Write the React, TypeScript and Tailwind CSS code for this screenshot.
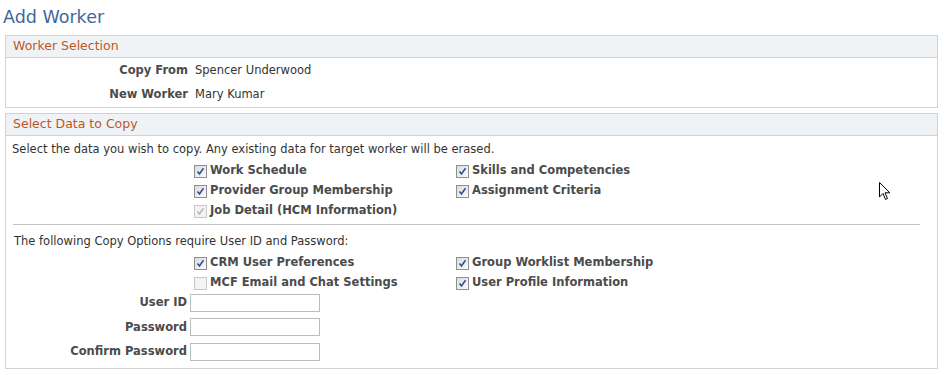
import React from "react";

function Box({ checked, disabled }: { checked: boolean; disabled?: boolean }) {
  return (
    <span
      className={
        "inline-flex items-center justify-center w-[13px] h-[13px] mr-[3px] shrink-0 border " +
        (disabled
          ? "border-[#c8c8c8] bg-[#f4f4f4]"
          : "border-[#8f8f8f] bg-gradient-to-br from-[#dcdcdc] to-[#fbfbfb]")
      }
    >
      {checked && (
        <svg width="9" height="9" viewBox="0 0 9 9">
          <path
            d="M1.5 4.5 L3.5 7 L7.5 1.2"
            fill="none"
            stroke={disabled ? "#b8b8b8" : "#2f4f9e"}
            strokeWidth="1.6"
          />
        </svg>
      )}
    </span>
  );
}

function Check({ label, checked, disabled }: { label: string; checked: boolean; disabled?: boolean }) {
  return (
    <div className="flex items-center h-[20px]">
      <Box checked={checked} disabled={disabled} />
      <span className="font-bold text-[#4b4b4b]">{label}</span>
    </div>
  );
}

function Header({ title }: { title: string }) {
  return (
    <div className="h-[22px] bg-[#eff3f5] border-b border-[#cfd3d8] flex items-center pl-[7px] text-[12.5px] text-[#c0571e]">
      {title}
    </div>
  );
}

function Field({ label }: { label: string }) {
  return (
    <div className="flex items-center h-[24.5px]">
      <div className="w-[184px] text-right pr-[3px] font-bold text-[#4b4b4b]">{label}</div>
      <div className="w-[130px] h-[18px] border border-[#bcbcbc] bg-white" />
    </div>
  );
}

export default function App() {
  return (
    <div
      className="relative w-[944px] h-[375px] bg-white text-[11.5px] text-[#333333] overflow-hidden"
      style={{ fontFamily: '"DejaVu Sans", Verdana, sans-serif' }}
    >
      <div className="h-[35px] pl-[3px] pt-[6px] text-[17.5px] leading-[22px] text-[#41689a]">Add Worker</div>

      <div className="ml-[5px] w-[933px] border border-[#cfd3d8]">
        <Header title="Worker Selection" />
        <div className="h-[49px] flex flex-col justify-center gap-[6px]">
          <div className="flex items-center h-[18px]">
            <div className="w-[182px] text-right font-bold text-[#4b4b4b]">Copy From</div>
            <div className="pl-[7px]">Spencer Underwood</div>
          </div>
          <div className="flex items-center h-[18px]">
            <div className="w-[182px] text-right font-bold text-[#4b4b4b]">New Worker</div>
            <div className="pl-[7px]">Mary Kumar</div>
          </div>
        </div>
      </div>

      <div className="ml-[5px] mt-[5px] w-[933px] h-[256px] border border-[#cfd3d8]">
        <Header title="Select Data to Copy" />
        <div className="pl-[6px] pt-[5px] h-[20px] leading-[16px]">
          Select the data you wish to copy. Any existing data for target worker will be erased.
        </div>
        <div className="grid grid-cols-[262px_262px] pl-[188px] pt-[5px]">
          <Check label="Work Schedule" checked />
          <Check label="Skills and Competencies" checked />
          <Check label="Provider Group Membership" checked />
          <Check label="Assignment Criteria" checked />
          <Check label="Job Detail (HCM Information)" checked disabled />
        </div>
        <div className="ml-[7px] mt-[3px] w-[907px] border-t border-[#c2c2c2]" />
        <div className="pl-[8px] pt-[8px] h-[24px] leading-[16px]">
          The following Copy Options require User ID and Password:
        </div>
        <div className="grid grid-cols-[262px_262px] pl-[188px] pt-[4px]">
          <Check label="CRM User Preferences" checked />
          <Check label="Group Worklist Membership" checked />
          <Check label="MCF Email and Chat Settings" checked={false} disabled />
          <Check label="User Profile Information" checked />
        </div>
        <div className="flex flex-col -mt-[2.5px]">
          <Field label="User ID" />
          <Field label="Password" />
          <Field label="Confirm Password" />
        </div>
      </div>

      <svg className="absolute left-[879px] top-[182px]" width="12" height="19" viewBox="0 0 12 19">
        <path d="M0.5 0.5 L0.5 15 L4 11.5 L6.5 17.5 L8.5 16.5 L6 10.8 L10.8 10.8 Z" fill="white" stroke="black" strokeWidth="1" />
      </svg>
    </div>
  );
}
